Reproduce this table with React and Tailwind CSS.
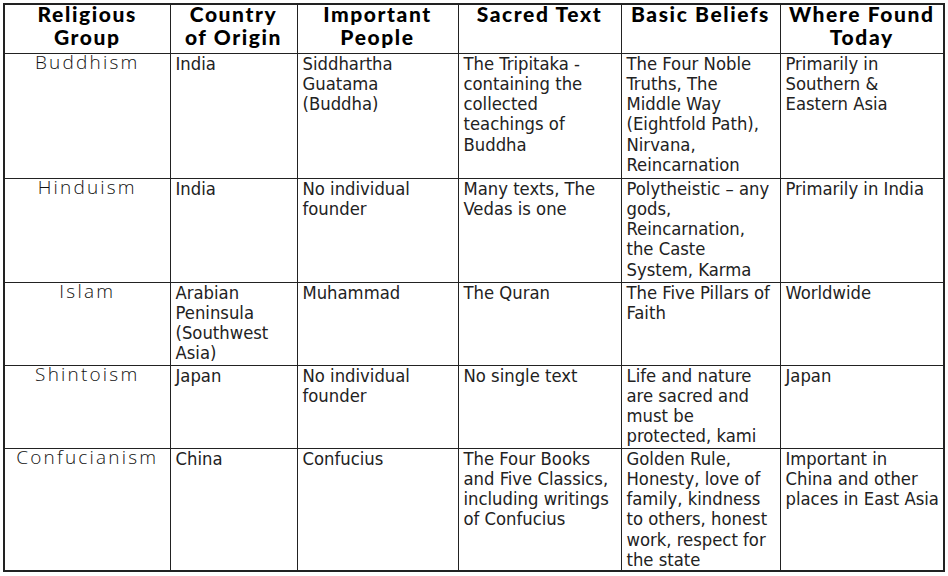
const headers = [
  ["Religious", "Group"],
  ["Country", "of Origin"],
  ["Important", "People"],
  ["Sacred Text"],
  ["Basic Beliefs"],
  ["Where Found", "Today"],
];

// line breaks copied from the chart so each cell wraps the same way
const rows = [
  {
    name: "Buddhism",
    h: "h-[125px]",
    cells: [
      ["India"],
      ["Siddhartha", "Guatama", "(Buddha)"],
      ["The Tripitaka -", "containing the", "collected", "teachings of", "Buddha"],
      ["The Four Noble", "Truths, The", "Middle Way", "(Eightfold Path),", "Nirvana,", "Reincarnation"],
      ["Primarily in", "Southern &", "Eastern Asia"],
    ],
  },
  {
    name: "Hinduism",
    h: "h-[104px]",
    cells: [
      ["India"],
      ["No individual", "founder"],
      ["Many texts, The", "Vedas is one"],
      ["Polytheistic – any", "gods,", "Reincarnation,", "the Caste", "System, Karma"],
      ["Primarily in India"],
    ],
  },
  {
    name: "Islam",
    h: "h-[83px]",
    cells: [
      ["Arabian", "Peninsula", "(Southwest", "Asia)"],
      ["Muhammad"],
      ["The Quran"],
      ["The Five Pillars of", "Faith"],
      ["Worldwide"],
    ],
  },
  {
    name: "Shintoism",
    h: "h-[83px]",
    cells: [
      ["Japan"],
      ["No individual", "founder"],
      ["No single text"],
      ["Life and nature", "are sacred and", "must be", "protected, kami"],
      ["Japan"],
    ],
  },
  {
    name: "Confucianism",
    h: "h-[120px]",
    cells: [
      ["China"],
      ["Confucius"],
      ["The Four Books", "and Five Classics,", "including writings", "of Confucius"],
      ["Golden Rule,", "Honesty, love of", "family, kindness", "to others, honest", "work, respect for", "the state"],
      ["Important in", "China and other", "places in East Asia"],
    ],
  },
];

const widths = ["w-[166px]", "w-[127px]", "w-[161px]", "w-[163px]", "w-[159px]", "w-[164px]"];

const App = () => {
  return (
    <div className="w-[948px] h-[576px] bg-white pt-[3px] pl-[3px] overflow-hidden">
      <table className="table-fixed border-collapse w-[940px] border-2 border-[#222]">
        <colgroup>
          {widths.map((w, i) => (
            <col key={i} className={w} />
          ))}
        </colgroup>
        <thead>
          <tr className="h-[49px]">
            {headers.map((lines, i) => (
              <th
                key={i}
                className="border border-[#222] align-top text-center font-['Lato',sans-serif] font-black text-[21px] leading-[23px] tracking-[1.6px] text-black p-0"
              >
                <div className="-mt-[3px]">
                  {lines.map((l, j) => (
                    <div key={j}>{l}</div>
                  ))}
                </div>
              </th>
            ))}
          </tr>
        </thead>
        <tbody>
          {rows.map((r) => (
            <tr key={r.name} className={r.h}>
              <td className="border border-[#222] align-top text-center font-['Open_Sans',sans-serif] font-light text-[19px] leading-[16px] tracking-[2.2px] text-[#111] pt-0">
                {r.name}
              </td>
              {r.cells.map((lines, i) => (
                <td
                  key={i}
                  className="border border-[#222] align-top px-[5px] pt-0 font-['DejaVu_Sans_Condensed','DejaVu_Sans',sans-serif] text-[18.3px] leading-[20.3px] text-[#222]"
                >
                  {lines.map((l, j) => (
                    <div key={j} className="whitespace-nowrap">
                      {l}
                    </div>
                  ))}
                </td>
              ))}
            </tr>
          ))}
        </tbody>
      </table>
    </div>
  );
};

export default App;
